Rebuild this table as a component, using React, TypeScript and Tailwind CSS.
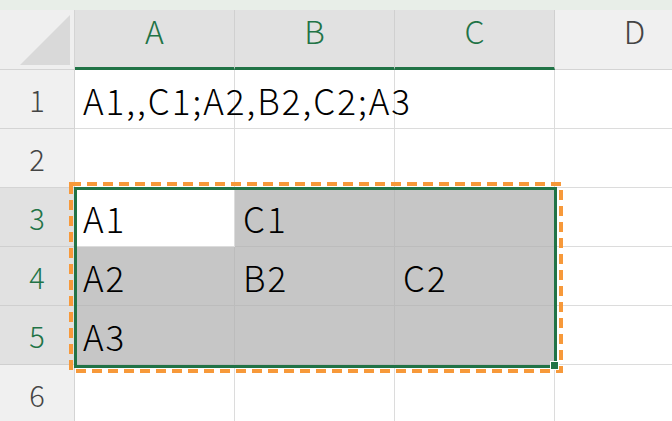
import React from 'react';

const cols = ['A', 'B', 'C', 'D'];
const rows = [1, 2, 3, 4, 5, 6];

const cellText: Record<string, string> = {
  A1: 'A1,,C1;A2,B2,C2;A3',
  A3: 'A1',
  B3: 'C1',
  A4: 'A2',
  B4: 'B2',
  C4: 'C2',
  A5: 'A3',
};

const inSel = (c: string, r: number) => r >= 3 && r <= 5 && c !== 'D';

export default function App() {
  return (
    <div
      className="w-[672px] h-[421px] overflow-hidden bg-white relative font-light"
      style={{ fontFamily: '"Noto Sans CJK JP", "Noto Sans", sans-serif' }}
    >
      <div className="h-[10px] bg-[#e8eee8]" />
      <div className="grid grid-cols-[75px_160px_160px_160px_160px] grid-rows-[60px_59px_59px_59px_59px_59px_59px]">
        {/* corner */}
        <div className="bg-[#efefef] border-r border-b border-[#d4d4d4] relative">
          <svg className="absolute left-0 top-0" width="75" height="60">
            <polygon points="20,55 70,5 70,55" fill="#d9d9d9" />
          </svg>
        </div>
        {cols.map((c) => (
          <div
            key={c}
            className={
              c === 'D'
                ? 'bg-[#f0f0f0] border-r border-b border-[#d4d4d4] flex items-center justify-center text-[32px] text-[#444] leading-none pb-[20px]'
                : 'bg-[#e1e1e1] border-r border-[#d0d0d0] border-b-[3px] border-b-[#217346] flex items-center justify-center text-[32px] text-[#217346] leading-none pb-[18px]'
            }
          >
            {c}
          </div>
        ))}
        {rows.map((r) => (
          <React.Fragment key={r}>
            <div
              className={
                r >= 3 && r <= 5
                  ? 'bg-[#e1e1e1] border-r border-b border-[#cfcfcf] flex items-center justify-center text-[29px] text-[#217346] leading-none'
                  : 'bg-[#f0f0f0] border-r border-b border-[#d4d4d4] flex items-center justify-center text-[29px] text-[#444] leading-none'
              }
            >
              {r}
            </div>
            {cols.map((c) => {
              const id = `${c}${r}`;
              const gray = inSel(c, r) && id !== 'A3';
              return (
                <div
                  key={id}
                  className={
                    (gray ? 'bg-[#c6c6c6] border-[#bcbcbc] ' : 'bg-white border-[#dcdcdc] ') +
                    (id === 'A1' ? 'relative z-10 ' : '') +
                    'border-r border-b flex items-center pl-[8px] text-[35px] tracking-[2px] text-black leading-none whitespace-nowrap'
                  }
                >
                  {cellText[id] ?? ''}
                </div>
              );
            })}
          </React.Fragment>
        ))}
      </div>
      {/* marching ants around copied range */}
      <svg className="absolute left-[68px] top-[181px]" width="496" height="193">
        <rect x="3" y="3" width="490" height="187" fill="none" stroke="#f7993a" strokeWidth="4" strokeDasharray="10 6" />
      </svg>
      {/* selection border */}
      <div className="absolute left-[74px] top-[187px] w-[483px] h-[181px] border-[3px] border-[#217346]" />
      {/* fill handle */}
      <div className="absolute left-[550px] top-[361px] w-[9px] h-[9px] bg-[#217346] border border-white" />
    </div>
  );
}
